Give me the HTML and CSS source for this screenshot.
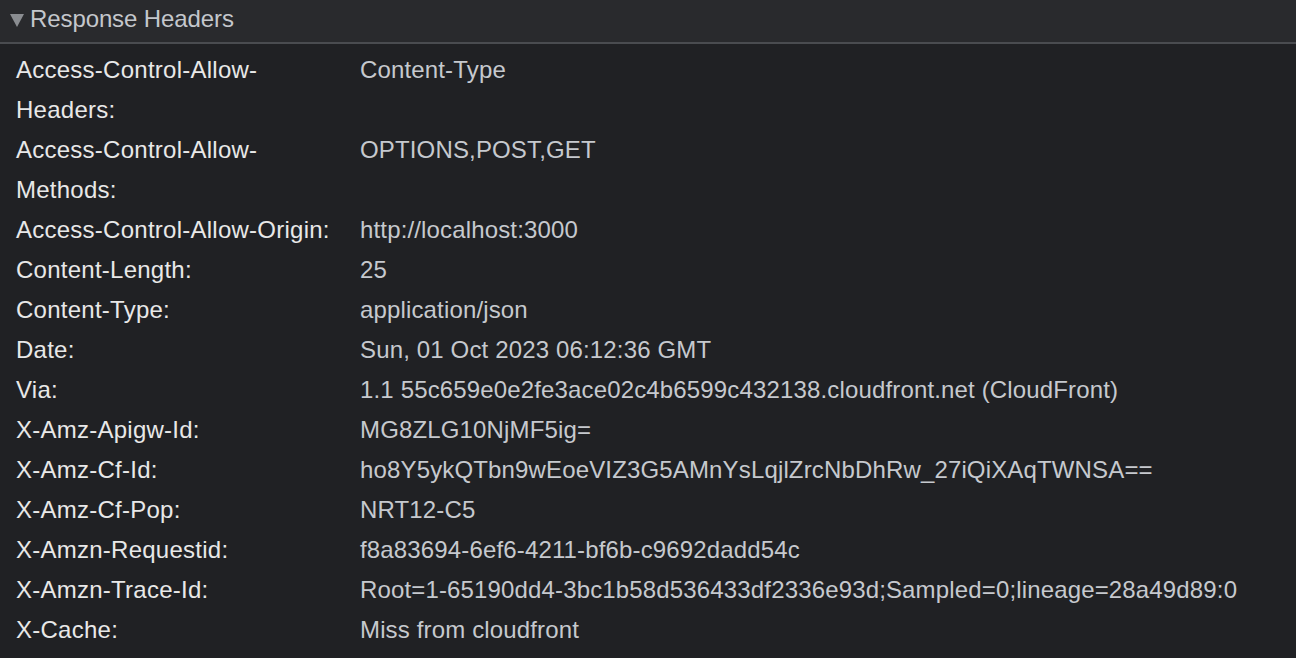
FILE: index.html
```html
<!DOCTYPE html>
<html>
<head>
<meta charset="utf-8">
<link rel="stylesheet" href="styles.css">
</head>
<body>
<div class="section">
  <div class="section-header">
    <span class="triangle"></span>
    <span class="title">Response Headers</span>
  </div>
  <div class="rows">
    <div class="row"><div class="name">Access-Control-Allow-<br>Headers:</div><div class="value">Content-Type</div></div>
    <div class="row"><div class="name">Access-Control-Allow-<br>Methods:</div><div class="value">OPTIONS,POST,GET</div></div>
    <div class="row"><div class="name">Access-Control-Allow-Origin:</div><div class="value">http://localhost:3000</div></div>
    <div class="row"><div class="name">Content-Length:</div><div class="value">25</div></div>
    <div class="row"><div class="name">Content-Type:</div><div class="value">application/json</div></div>
    <div class="row"><div class="name">Date:</div><div class="value">Sun, 01 Oct 2023 06:12:36 GMT</div></div>
    <div class="row"><div class="name">Via:</div><div class="value">1.1 55c659e0e2fe3ace02c4b6599c432138.cloudfront.net (CloudFront)</div></div>
    <div class="row"><div class="name">X-Amz-Apigw-Id:</div><div class="value">MG8ZLG10NjMF5ig=</div></div>
    <div class="row"><div class="name">X-Amz-Cf-Id:</div><div class="value">ho8Y5ykQTbn9wEoeVIZ3G5AMnYsLqjlZrcNbDhRw_27iQiXAqTWNSA==</div></div>
    <div class="row"><div class="name">X-Amz-Cf-Pop:</div><div class="value">NRT12-C5</div></div>
    <div class="row"><div class="name">X-Amzn-Requestid:</div><div class="value">f8a83694-6ef6-4211-bf6b-c9692dadd54c</div></div>
    <div class="row"><div class="name">X-Amzn-Trace-Id:</div><div class="value">Root=1-65190dd4-3bc1b58d536433df2336e93d;Sampled=0;lineage=28a49d89:0</div></div>
    <div class="row"><div class="name">X-Cache:</div><div class="value">Miss from cloudfront</div></div>
  </div>
</div>
</body>
</html>
```
FILE: styles.css
```css
html, body {
  margin: 0;
  padding: 0;
  background: #202124;
}
body {
  font-family: "Liberation Sans", Arial, Helvetica, sans-serif;
  font-size: 24px;
  width: 1296px;
  height: 658px;
  overflow: hidden;
}
.section-header {
  height: 38px;
  padding-bottom: 4px;
  background: #292a2d;
  border-bottom: 2px solid #4a4c50;
  display: flex;
  align-items: center;
  box-sizing: content-box;
}
.triangle {
  width: 0;
  height: 0;
  margin-left: 10px;
  margin-right: 6px;
  border-left: 7px solid transparent;
  border-right: 7px solid transparent;
  border-top: 13px solid #8a8d91;
  margin-top: 2px;
}
.title {
  color: #c4c7cc;
  line-height: 30px;
  letter-spacing: -0.1px;
}
.rows {
  padding-top: 6px;
}
.row {
  display: flex;
  line-height: 40px;
}
.name {
  width: 360px;
  padding-left: 16px;
  padding-right: 14px;
  box-sizing: border-box;
  color: #e8e8e8;
  flex-shrink: 0;
  letter-spacing: 0.25px;
}
.value {
  color: #c6c9ce;
  white-space: nowrap;
  letter-spacing: 0.15px;
}
```
